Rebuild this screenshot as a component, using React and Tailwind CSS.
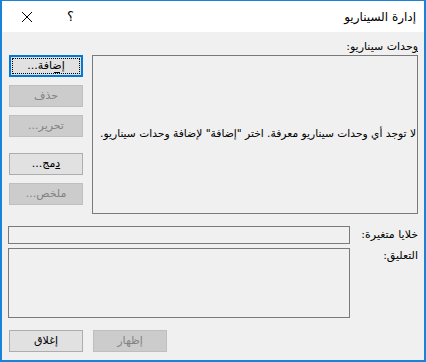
import React from "react";

const font = { fontFamily: '"DejaVu Sans", "Noto Sans", sans-serif' };

const Btn = ({ children, disabled, primary, className = "" }) => {
  if (disabled) {
    return (
      <div className={`w-[74px] h-[22px] flex items-center justify-center border border-[#bfbfbf] bg-[#cccccc] text-[#838383] text-[11px] ${className}`}>
        {children}
      </div>
    );
  }
  if (primary) {
    return (
      <div className={`w-[74px] h-[22px] border-2 border-[#0078d7] bg-[#e1e1e1] p-[1px] ${className}`}>
        <div className="w-full h-full border border-dotted border-black flex items-center justify-center text-[11px] text-black">
          {children}
        </div>
      </div>
    );
  }
  return (
    <div className={`w-[74px] h-[22px] flex items-center justify-center border border-[#adadad] bg-[#e1e1e1] text-black text-[11px] ${className}`}>
      {children}
    </div>
  );
};

export default function App() {
  return (
    <div
      dir="rtl"
      style={font}
      className="w-[426px] h-[362px] border-t border-x-2 border-b-2 border-[#1883d7] bg-[#f0f0f0] flex flex-col overflow-hidden"
    >
      {/* title bar */}
      <div className="h-[31px] bg-white flex items-center pr-[8px] pl-[19px] shrink-0">
        <span className="text-[12px] text-black">إدارة السيناريو</span>
        <div className="flex-1" />
        <span className="text-[13px] text-black ml-[34px]">؟</span>
        <svg width="12" height="12" viewBox="0 0 12 12" className="shrink-0">
          <path d="M1 1L11 11M11 1L1 11" stroke="#000" strokeWidth="1" fill="none" />
        </svg>
      </div>

      {/* body */}
      <div className="flex-1 flex flex-col pt-[7px] pr-[6px] pl-[7px] pb-[8px] text-[11px] text-black">
        <div className="h-[16px] leading-[16px]">
          <span className="underline">و</span>حدات سيناريو:
        </div>
        <div className="flex gap-[9px]">
          <div className="flex-1 h-[159px] border border-[#7a7a7a] flex items-center justify-start pr-[1px] overflow-hidden">
            <span className="whitespace-nowrap text-[10.7px]">
              لا توجد أي وحدات سيناريو معرفة. اختر "إضافة" لإضافة وحدات سيناريو.
            </span>
          </div>
          <div className="w-[74px] flex flex-col">
            <Btn primary>
              <span className="relative">
                إضافة...
                <span className="absolute right-[5px] bottom-[1px] w-[6px] h-px bg-black" />
              </span>
            </Btn>
            <Btn disabled className="mt-[8px]">حذف</Btn>
            <Btn disabled className="mt-[8px]">تحرير...</Btn>
            <Btn className="mt-[16px]">
              <span className="underline">د</span>مج...
            </Btn>
            <Btn disabled className="mt-[8px]">ملخص...</Btn>
          </div>
        </div>

        <div className="flex mt-[12px] h-[18px]">
          <div className="flex-1 leading-[18px]">خلايا متغيرة:</div>
          <div className="w-[342px] h-[18px] border border-[#7a7a7a] ml-[-1px]" />
        </div>
        <div className="flex mt-[4px] h-[70px]">
          <div className="flex-1 leading-[16px]">التعليق:</div>
          <div className="w-[342px] h-[70px] border border-[#7a7a7a] ml-[-1px]" />
        </div>

        <div className="flex-1" />
        <div className="flex justify-end gap-[10px]">
          <Btn disabled>إظهار</Btn>
          <Btn>إغلاق</Btn>
        </div>
      </div>
    </div>
  );
}
